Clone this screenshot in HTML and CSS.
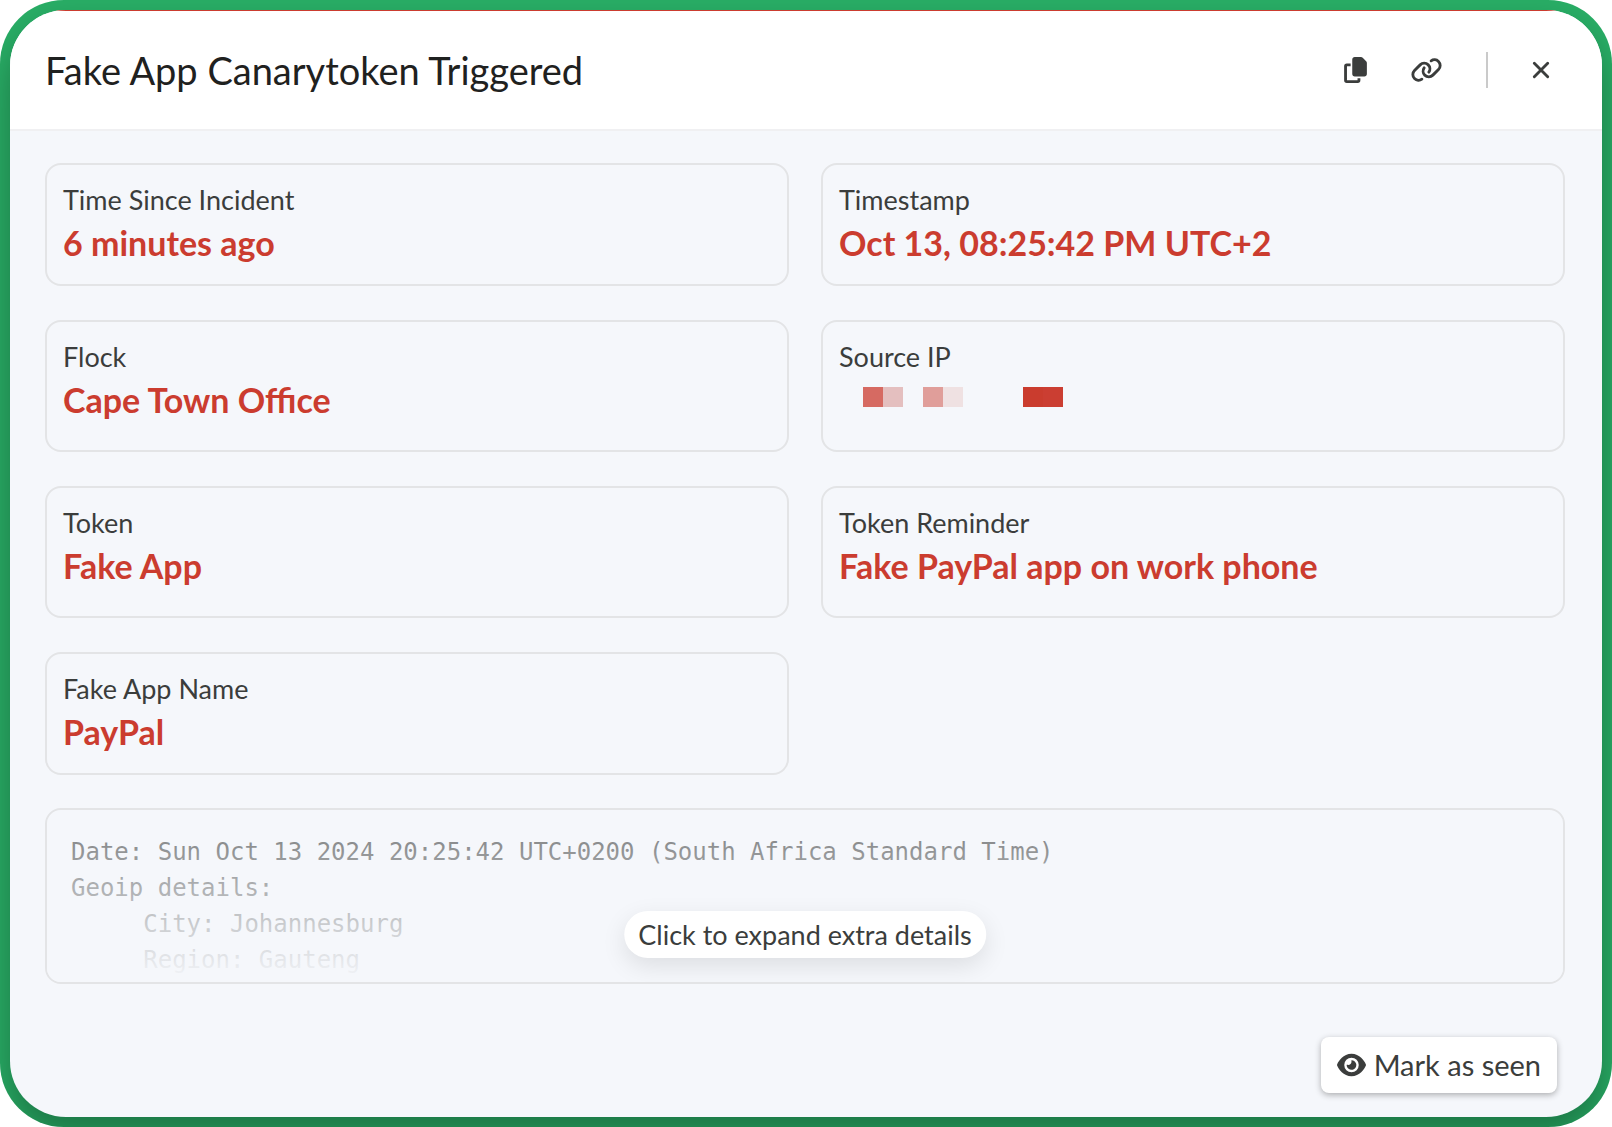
FILE: index.html
```html
<!DOCTYPE html>
<html lang="en">
<head>
    <meta charset="UTF-8">
    <meta name="viewport" content="width=device-width, initial-scale=1.0">
    <title>Fake App Canarytoken Triggered</title>
    <link rel="stylesheet" href="styles.css">
</head>
<body>
    <div class="backdrop">
        <div class="modal" role="dialog" aria-labelledby="incident-title">
            <header class="modal-header">
                <h1 id="incident-title">Fake App Canarytoken Triggered</h1>
                <div class="actions">
                    <button type="button" class="icon-btn" aria-label="Copy">
                        <svg width="23" height="26" viewBox="0 0 448 512">
                            <path d="M208 0L332.1 0c12.7 0 24.9 5.1 33.9 14.1l67.9 67.9c9 9 14.1 21.2 14.1 33.9L448 336c0 26.5-21.5 48-48 48l-192 0c-26.5 0-48-21.5-48-48l0-288c0-26.5 21.5-48 48-48z"/>
                            <path class="line" d="M128 156H52a24 24 0 0 0-24 24V460a24 24 0 0 0 24 24H268a24 24 0 0 0 24-24V416"/>
                        </svg>
                    </button>
                    <button type="button" class="icon-btn" aria-label="Copy link">
                        <svg width="33" height="26" viewBox="0 0 640 512">
                            <path class="line line-round" d="M411 75c44-32 105-27 145 12c44 44 44 115 0 159L445 357c-44 44-115 44-159 0c-39-39-44-100-12-144"/>
                            <path class="line line-round" d="M229 437c-44 32-105 27-145-12c-44-44-44-115 0-159L195 155c44-44 115-44 159 0c39 39 44 100 12 144"/>
                        </svg>
                    </button>
                    <span class="divider"></span>
                    <button type="button" class="icon-btn" aria-label="Close">
                        <svg width="20" height="26" viewBox="0 0 384 512">
                            <path class="line line-round" d="M60 124L324 388M324 124L60 388"/>
                        </svg>
                    </button>
                </div>
            </header>

            <main class="modal-body">
                <dl class="cards">
                    <div class="card">
                        <dt>Time Since Incident</dt>
                        <dd>6 minutes ago</dd>
                    </div>
                    <div class="card">
                        <dt>Timestamp</dt>
                        <dd>Oct 13, 08:25:42 PM UTC+2</dd>
                    </div>
                    <div class="card card-tall">
                        <dt>Flock</dt>
                        <dd>Cape Town Office</dd>
                    </div>
                    <div class="card card-tall">
                        <dt>Source IP</dt>
                        <dd class="redacted">
                            <svg width="224" height="20" viewBox="0 0 224 20" shape-rendering="crispEdges" role="img" aria-label="Redacted">
                                <rect x="24" width="20" height="20" fill="#d66a62"/>
                                <rect x="44" width="20" height="20" fill="#e4bfbf"/>
                                <rect x="84" width="20" height="20" fill="#e09e9a"/>
                                <rect x="104" width="20" height="20" fill="#efe1e2"/>
                                <rect x="184" width="20" height="20" fill="#ca3c2e"/>
                                <rect x="204" width="20" height="20" fill="#cb3e32"/>
                            </svg>
                        </dd>
                    </div>
                    <div class="card card-tall">
                        <dt>Token</dt>
                        <dd>Fake App</dd>
                    </div>
                    <div class="card card-tall">
                        <dt>Token Reminder</dt>
                        <dd>Fake PayPal app on work phone</dd>
                    </div>
                    <div class="card">
                        <dt>Fake App Name</dt>
                        <dd>PayPal</dd>
                    </div>
                </dl>

                <section class="details">
                    <pre>Date: Sun Oct 13 2024 20:25:42 UTC+0200 (South Africa Standard Time)</pre>
                    <pre>Geoip details:
     City: Johannesburg
     Region: Gauteng</pre>
                    <button type="button" class="expand-btn">Click to expand extra details</button>
                </section>
            </main>

            <footer class="modal-footer">
                <button type="button" class="seen-btn">
                    <svg width="29" height="26" viewBox="0 0 576 512"><path d="M288 32c-80.8 0-145.5 36.8-192.6 80.6C48.6 156 17.3 208 2.5 243.7c-3.3 7.9-3.3 16.7 0 24.6C17.3 304 48.6 356 95.4 399.4C142.5 443.2 207.2 480 288 480s145.5-36.8 192.6-80.6c46.8-43.5 78.1-95.4 93-131.1c3.3-7.9 3.3-16.7 0-24.6c-14.9-35.7-46.2-87.7-93-131.1C433.5 68.8 368.8 32 288 32zM144 256a144 144 0 1 1 288 0 144 144 0 1 1 -288 0zm144-64c0 35.3-28.7 64-64 64c-7.1 0-13.9-1.2-20.3-3.3c-5.5-1.8-11.9 1.6-11.7 7.4c.3 6.9 1.3 13.8 3.2 20.7c13.7 51.2 66.4 81.6 117.6 67.9s81.6-66.4 67.9-117.6c-11.1-41.5-47.8-69.4-88.6-71.1c-5.8-.2-9.2 6.1-7.4 11.7c2.1 6.4 3.3 13.2 3.3 20.3z"/></svg>
                    Mark as seen
                </button>
            </footer>
        </div>
    </div>
</body>
</html>
```

FILE: styles.css
```css
:root {
    --green: #29ae66;
    --red: #cb3c2f;
    --text: #3b3d3c;
    --heading: #1f2120;
    --panel: #f5f7fb;
    --border: #e3e4e6;
}

* {
    margin: 0;
    padding: 0;
    box-sizing: border-box;
}

body {
    font-family: Lato, "Liberation Sans", sans-serif;
    color: var(--text);
    background-color: #fff;
}

button {
    font-family: inherit;
    color: inherit;
    border: none;
    background: none;
    cursor: pointer;
}

svg {
    display: block;
    fill: currentColor;
}

.line {
    fill: none;
    stroke: currentColor;
    stroke-width: 56;
}

.line-round {
    stroke-linecap: round;
}

.backdrop {
    display: flex;
    min-height: 100vh;
    padding: 10px;
    background-color: var(--green);
    border-radius: 64px;
    overflow: hidden;
}

.modal {
    flex: 1;
    display: flex;
    flex-direction: column;
    background-color: var(--panel);
    border-radius: 56px;
    box-shadow: 0 20px 36px rgba(0, 0, 0, 0.32);
    overflow: hidden;
}

.modal-header {
    display: flex;
    justify-content: space-between;
    align-items: center;
    height: 121px;
    padding: 0 51px 0 35px;
    background-color: #fff;
    border-top: 1px solid var(--red);
    border-bottom: 2px solid #f0f0f2;
}

.modal-header h1 {
    font-size: 38px;
    font-weight: 400;
    color: var(--heading);
}

.actions {
    display: flex;
    align-items: center;
    gap: 43px;
}

.divider {
    width: 2px;
    height: 36px;
    background-color: #cacaca;
}

.modal-body {
    flex: 1;
    padding: 32px 37px 0 35px;
}

.cards {
    display: grid;
    grid-template-columns: 1fr 1fr;
    gap: 34px 32px;
}

.card {
    padding: 17px 16px 16px;
    border: 2px solid var(--border);
    border-radius: 16px;
}

.card-tall {
    padding-bottom: 25px;
}

.card dt {
    font-size: 27px;
    line-height: 36px;
}

.card dd {
    font-size: 34px;
    font-weight: 700;
    line-height: 50px;
    color: var(--red);
}

.card .redacted {
    padding: 12px 0 18px;
}

.details {
    position: relative;
    margin-top: 33px;
    padding: 24px 24px 4px;
    border: 2px solid var(--border);
    border-radius: 16px;
    overflow: hidden;
}

.details pre {
    width: max-content;
    font-family: "DejaVu Sans Mono", monospace;
    font-size: 24px;
    line-height: 36px;
}

/* fades the text out towards the bottom edge */
.details::after {
    content: "";
    position: absolute;
    inset: 0;
    background: linear-gradient(rgba(245, 247, 251, 0.3), rgb(245, 247, 251));
}

.expand-btn {
    position: absolute;
    z-index: 1;
    left: 50%;
    bottom: 24px;
    transform: translateX(-50%);
    padding: 0 14px;
    font-size: 27px;
    line-height: 47px;
    white-space: nowrap;
    background-color: #fff;
    border-radius: 24px;
    box-shadow: 0 8px 24px rgba(0, 0, 0, 0.1);
}

.modal-footer {
    display: flex;
    justify-content: flex-end;
    padding: 52px 45px 24px;
}

.seen-btn {
    display: flex;
    align-items: center;
    gap: 8px;
    padding: 0 16px;
    font-size: 29px;
    line-height: 56px;
    background-color: #fff;
    border-radius: 8px;
    box-shadow: 0 2px 6px rgba(0, 0, 0, 0.3);
}
```
